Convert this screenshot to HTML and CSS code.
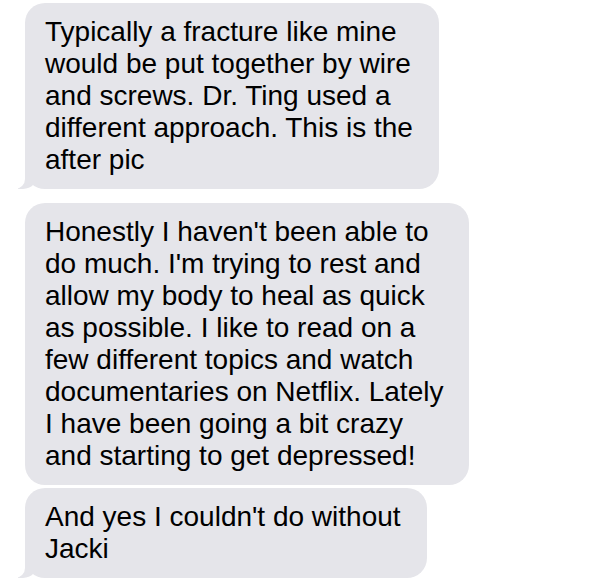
FILE: index.html
```html
<!DOCTYPE html>
<html lang="en">
<head>
<meta charset="utf-8">
<title>Messages</title>
<link rel="stylesheet" href="styles.css">
</head>
<body>
<main class="thread">
  <div class="bubble bubble--tail">Typically a fracture like mine<br>would be put together by wire<br>and screws. Dr. Ting used a<br>different approach. This is the<br>after pic</div>
  <div class="bubble bubble--grouped">Honestly I haven't been able to<br>do much. I'm trying to rest and<br>allow my body to heal as quick<br>as possible. I like to read on a<br>few different topics and watch<br>documentaries on Netflix. Lately<br>I have been going a bit crazy<br>and starting to get depressed!</div>
  <div class="bubble bubble--tail bubble--last">And yes I couldn't do without<br>Jacki</div>
</main>
</body>
</html>
```

FILE: styles.css
```css
html, body {
  margin: 0;
  padding: 0;
  background: #ffffff;
}

.thread {
  display: flex;
  flex-direction: column;
  align-items: flex-start;
  padding: 3px 0 0 25px;
  font-family: "Liberation Sans", Arial, sans-serif;
  font-size: 28px;
  line-height: 32px;
  color: #000000;
}

.bubble {
  position: relative;
  background: #e5e5ea;
  border-radius: 20px;
  padding: 13px 26px 13px 20px;
  white-space: nowrap;
}

.bubble--tail {
  margin-bottom: 14px;
}

.bubble--grouped {
  margin-bottom: 3px;
}

.bubble--last {
  margin-bottom: 0;
}

.bubble--tail::before {
  content: "";
  position: absolute;
  bottom: 0;
  left: -7px;
  width: 20px;
  height: 20px;
  background: #e5e5ea;
  border-bottom-right-radius: 15px;
}

.bubble--tail::after {
  content: "";
  position: absolute;
  bottom: 0;
  left: -10px;
  width: 10px;
  height: 20px;
  background: #ffffff;
  border-bottom-right-radius: 10px;
}
```
